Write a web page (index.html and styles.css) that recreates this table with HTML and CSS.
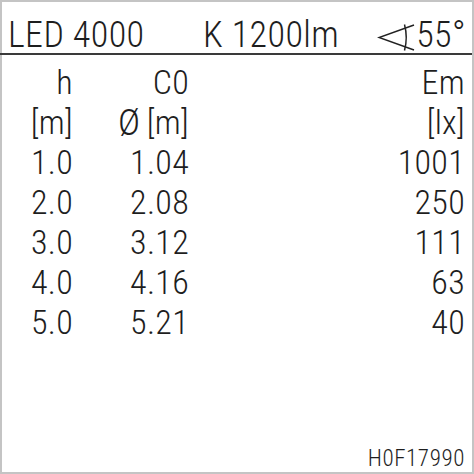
FILE: index.html
```html
<!DOCTYPE html>
<html><head><meta charset="utf-8"><link rel="stylesheet" href="styles.css"></head>
<body>
<div class="frame">
  <div class="header">
    <span class="h-led">LED 4000</span>
    <span class="h-k">K 1200lm</span>
    <span class="h-angle">
      <svg class="angle-icon" width="38" height="28" viewBox="0 0 38 28">
        <path d="M37 1 L2 13.5 L37 26" fill="none" stroke="#222" stroke-width="1.5"/>
        <path d="M27.5 0.5 Q31 13.5 27.5 26.5" fill="none" stroke="#222" stroke-width="1.5"/>
      </svg>55°</span>
  </div>
  <div class="table">
    <div class="c1">h</div><div class="c2">C0</div><div class="c3">Em</div>
    <div class="c1">[m]</div><div class="c2"><span class="dia">Ø</span>[m]</div><div class="c3">[lx]</div>
    <div class="c1">1.0</div><div class="c2">1.04</div><div class="c3">1001</div>
    <div class="c1">2.0</div><div class="c2">2.08</div><div class="c3">250</div>
    <div class="c1">3.0</div><div class="c2">3.12</div><div class="c3">111</div>
    <div class="c1">4.0</div><div class="c2">4.16</div><div class="c3">63</div>
    <div class="c1">5.0</div><div class="c2">5.21</div><div class="c3">40</div>
  </div>
  <div class="footer">H0F17990</div>
</div>
</body></html>
```
FILE: styles.css
```css
html,body{margin:0;padding:0;background:#fff}
.frame{
  width:474px;height:474px;box-sizing:border-box;
  border:2px solid #c4c4c4;
  display:flex;flex-direction:column;
  font-family:Roboto,"Liberation Sans",sans-serif;
  font-stretch:condensed;font-weight:300;color:#1e1e1e;
}
.header{
  height:53px;box-sizing:border-box;
  border-bottom:2px solid #3a3a3a;
  margin-left:-2px;
  display:flex;align-items:flex-end;
  font-size:36px;line-height:36px;
  letter-spacing:0.4px;
  padding:0 6px 0 8px;
}
.h-led{width:195px}
.h-k{flex:1}
.h-angle{display:flex;align-items:flex-end}
.angle-icon{margin:0 1px 1px 0}
.table{
  display:grid;
  grid-template-columns:71px 116px 1fr;
  grid-auto-rows:40px;
  font-size:34px;line-height:40px;
  letter-spacing:0.3px;
  margin-top:7px;
  padding-right:7px;
}
.c1,.c2,.c3{text-align:right;white-space:nowrap}
.dia{display:inline-block;margin-right:7px;transform:scale(1.1)}
.footer{
  margin-top:auto;
  text-align:right;
  font-size:23px;line-height:22px;
  letter-spacing:0.6px;
  padding:0 7px 2px 0;
}
```
